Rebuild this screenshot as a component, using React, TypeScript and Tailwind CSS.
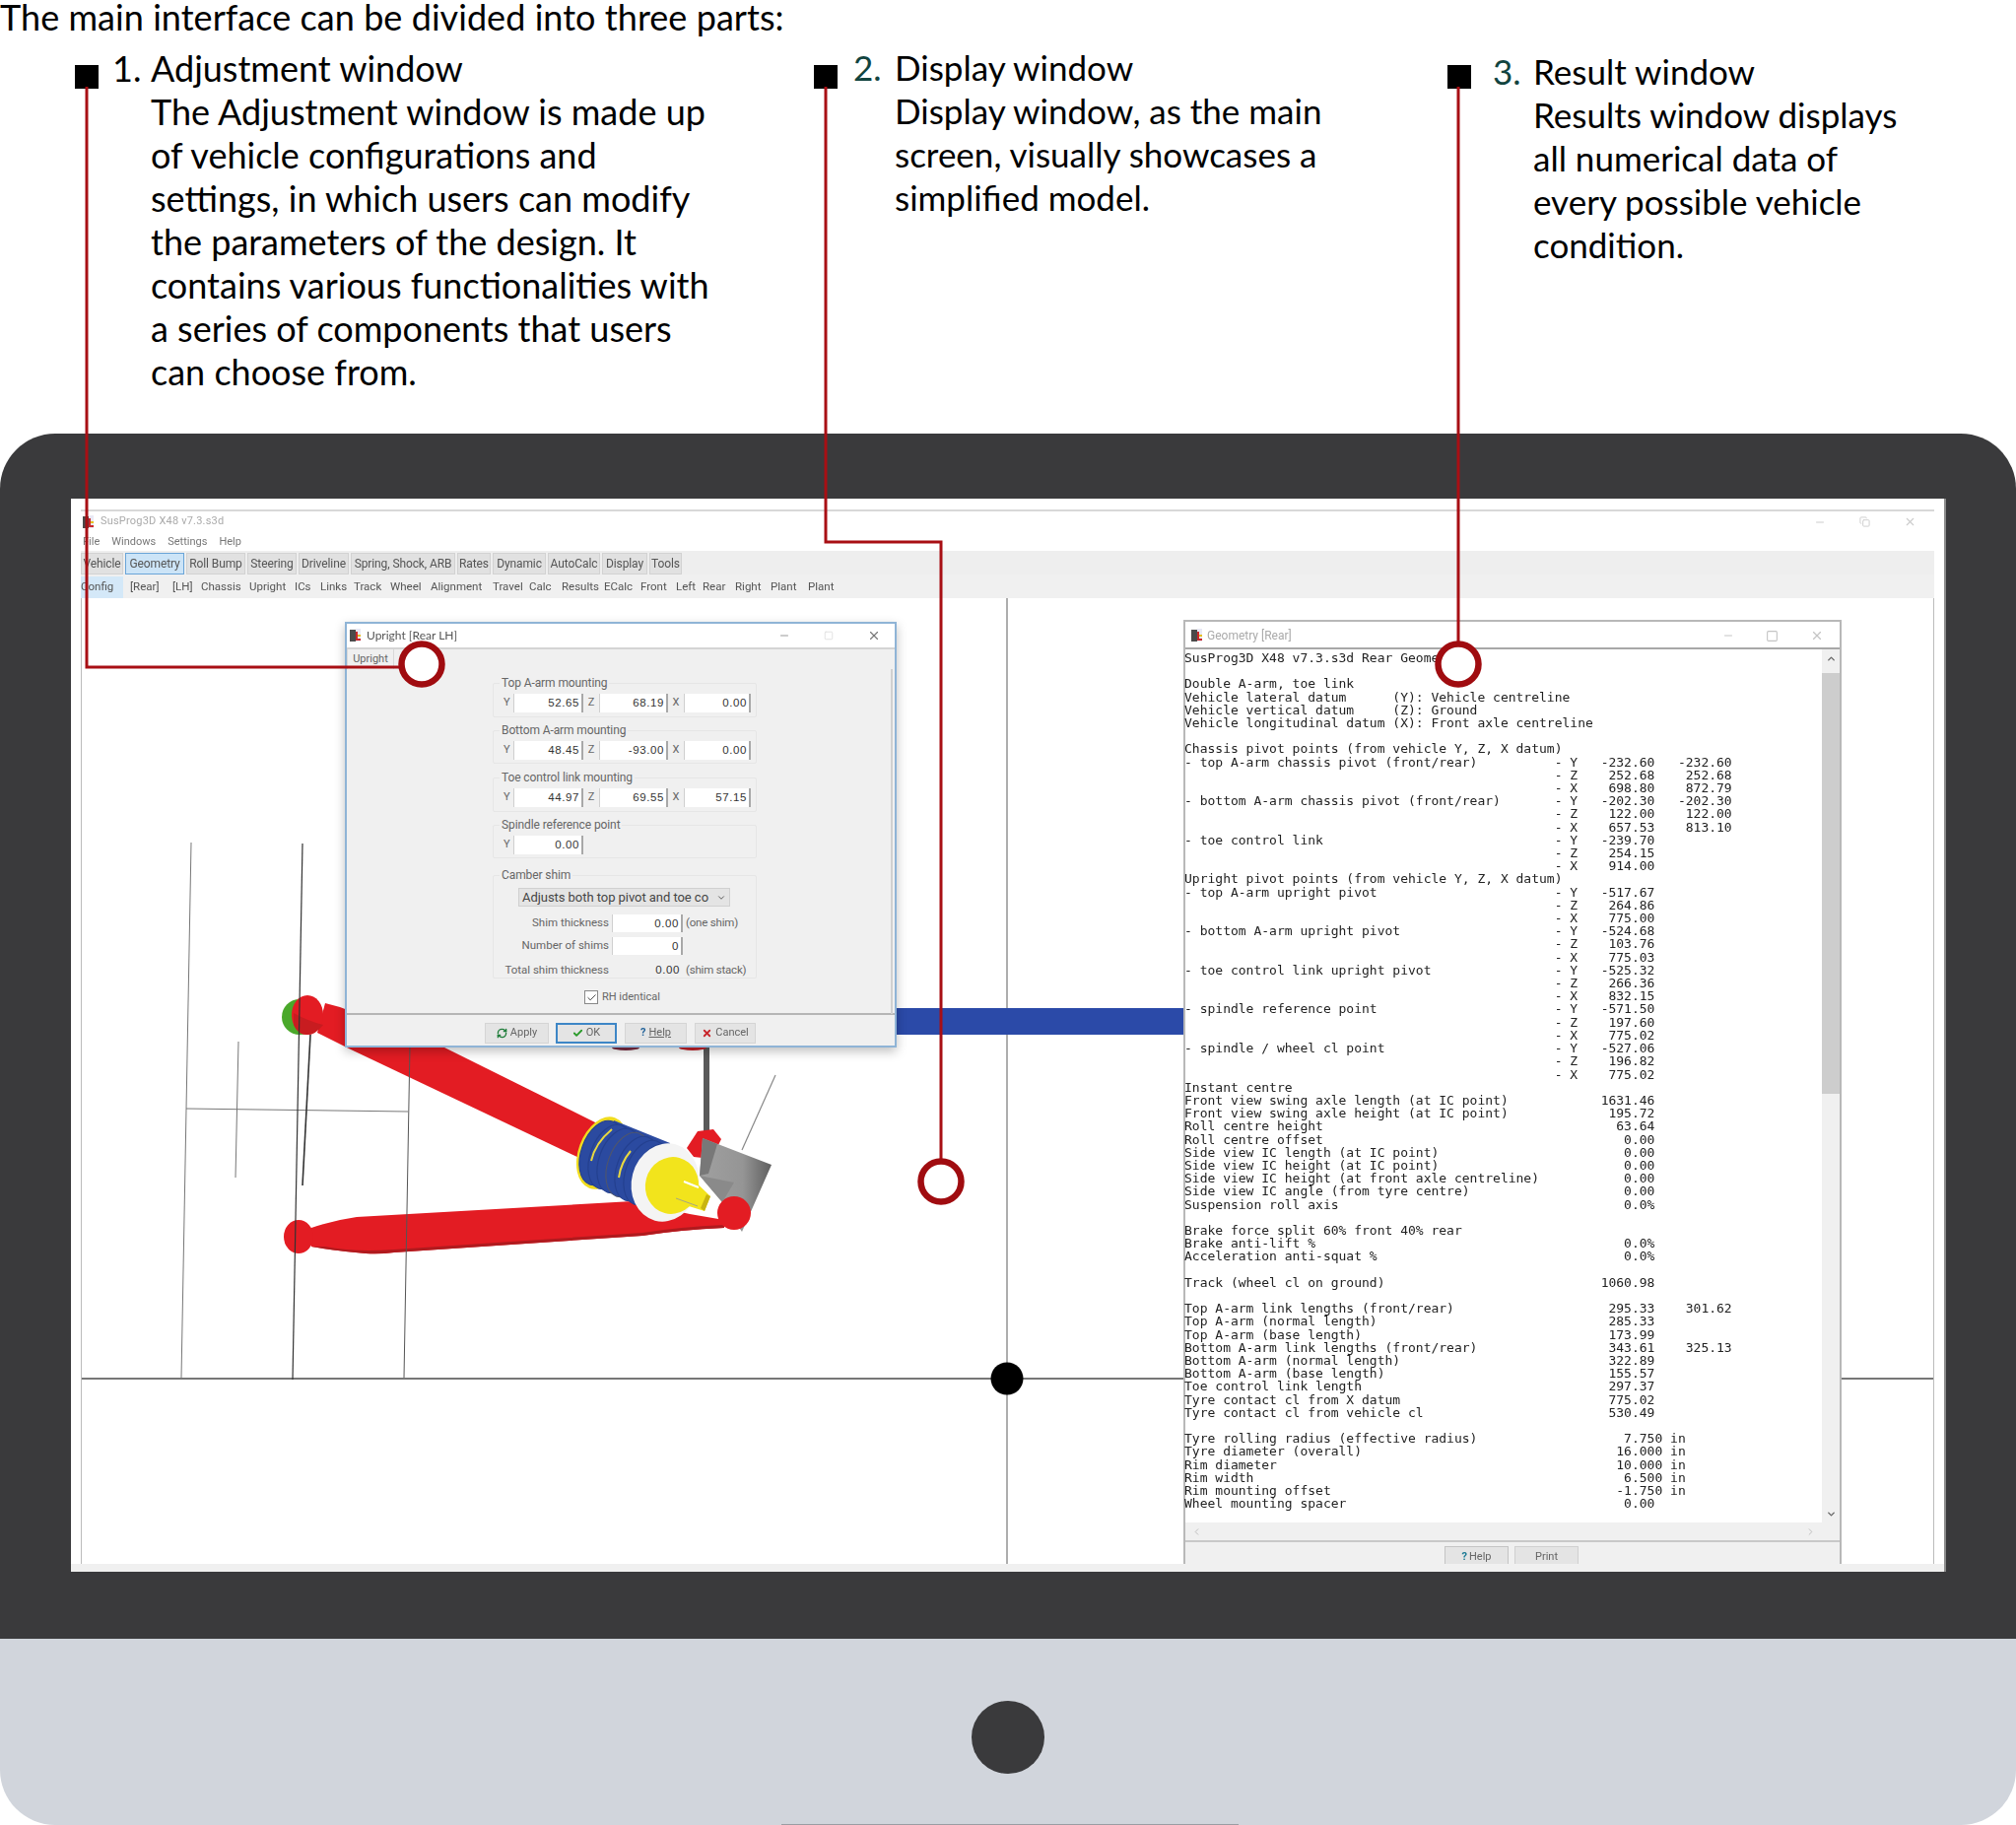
import React from "react";
import { Check, ChevronDown, ChevronLeft, ChevronRight, ChevronUp, Copy, Minus, RefreshCw, Square, X } from "lucide-react";

const tabs = [
  ["Vehicle", "w-[43px] bg-[#e1e1e1] border-[#d2d2d2]"],
  ["Geometry", "w-[60px] bg-[#cce4f7] border-[#6aa5d8]"],
  ["Roll Bump", "w-[60px] bg-[#e1e1e1] border-[#d2d2d2]"],
  ["Steering", "w-[50px] bg-[#e1e1e1] border-[#d2d2d2]"],
  ["Driveline", "w-[51px] bg-[#e1e1e1] border-[#d2d2d2]"],
  ["Spring, Shock, ARB", "w-[106px] bg-[#e1e1e1] border-[#d2d2d2]"],
  ["Rates", "w-[34px] bg-[#e1e1e1] border-[#d2d2d2]"],
  ["Dynamic", "w-[54px] bg-[#e1e1e1] border-[#d2d2d2]"],
  ["AutoCalc", "w-[53px] bg-[#e1e1e1] border-[#d2d2d2]"],
  ["Display", "w-[46px] bg-[#e1e1e1] border-[#d2d2d2]"],
  ["Tools", "w-[33px] bg-[#e1e1e1] border-[#d2d2d2]"],
];

const subTabs = [
  ["Config", "w-[50px]"],
  ["[Rear]", "w-[43px]"],
  ["[LH]", "w-[29px]"],
  ["Chassis", "w-[49px]"],
  ["Upright", "w-[46px]"],
  ["ICs", "w-[26px]"],
  ["Links", "w-[34px]"],
  ["Track", "w-[37px]"],
  ["Wheel", "w-[41px]"],
  ["Alignment", "w-[63px]"],
  ["Travel", "w-[37px]"],
  ["Calc", "w-[33px]"],
  ["Results", "w-[43px]"],
  ["ECalc", "w-[37px]"],
  ["Front", "w-[36px]"],
  ["Left", "w-[27px]"],
  ["Rear", "w-[33px]"],
  ["Right", "w-[36px]"],
  ["Plant", "w-[38px]"],
  ["Plant", "w-[38px]"],
];

function row(label: string, tag: string, v1: string, v2 = "") {
  let s = label.padEnd(48, " ");
  s += tag ? "- " + tag : "   ";
  s = s.padEnd(61 - v1.length, " ") + v1;
  if (v2) s = s.padEnd(71 - v2.length, " ") + v2;
  return s;
}

function val(label: string, v1: string) {
  return label.padEnd(61 - v1.length, " ") + v1;
}

function inch(label: string, v1: string) {
  return label.padEnd(62 - v1.length, " ") + v1 + " in";
}

const report = [
  "SusProg3D X48 v7.3.s3d Rear Geometry",
  "",
  "Double A-arm, toe link",
  "Vehicle lateral datum      (Y): Vehicle centreline",
  "Vehicle vertical datum     (Z): Ground",
  "Vehicle longitudinal datum (X): Front axle centreline",
  "",
  "Chassis pivot points (from vehicle Y, Z, X datum)",
  row("- top A-arm chassis pivot (front/rear)", "Y", "-232.60", "-232.60"),
  row("", "Z", "252.68", "252.68"),
  row("", "X", "698.80", "872.79"),
  row("- bottom A-arm chassis pivot (front/rear)", "Y", "-202.30", "-202.30"),
  row("", "Z", "122.00", "122.00"),
  row("", "X", "657.53", "813.10"),
  row("- toe control link", "Y", "-239.70"),
  row("", "Z", "254.15"),
  row("", "X", "914.00"),
  "Upright pivot points (from vehicle Y, Z, X datum)",
  row("- top A-arm upright pivot", "Y", "-517.67"),
  row("", "Z", "264.86"),
  row("", "X", "775.00"),
  row("- bottom A-arm upright pivot", "Y", "-524.68"),
  row("", "Z", "103.76"),
  row("", "X", "775.03"),
  row("- toe control link upright pivot", "Y", "-525.32"),
  row("", "Z", "266.36"),
  row("", "X", "832.15"),
  row("- spindle reference point", "Y", "-571.50"),
  row("", "Z", "197.60"),
  row("", "X", "775.02"),
  row("- spindle / wheel cl point", "Y", "-527.06"),
  row("", "Z", "196.82"),
  row("", "X", "775.02"),
  "Instant centre",
  val("Front view swing axle length (at IC point)", "1631.46"),
  val("Front view swing axle height (at IC point)", "195.72"),
  val("Roll centre height", "63.64"),
  val("Roll centre offset", "0.00"),
  val("Side view IC length (at IC point)", "0.00"),
  val("Side view IC height (at IC point)", "0.00"),
  val("Side view IC height (at front axle centreline)", "0.00"),
  val("Side view IC angle (from tyre centre)", "0.00"),
  val("Suspension roll axis", "0.0%"),
  "",
  "Brake force split 60% front 40% rear",
  val("Brake anti-lift %", "0.0%"),
  val("Acceleration anti-squat %", "0.0%"),
  "",
  val("Track (wheel cl on ground)", "1060.98"),
  "",
  row("Top A-arm link lengths (front/rear)", "", "295.33", "301.62"),
  val("Top A-arm (normal length)", "285.33"),
  val("Top A-arm (base length)", "173.99"),
  row("Bottom A-arm link lengths (front/rear)", "", "343.61", "325.13"),
  val("Bottom A-arm (normal length)", "322.89"),
  val("Bottom A-arm (base length)", "155.57"),
  val("Toe control link length", "297.37"),
  val("Tyre contact cl from X datum", "775.02"),
  val("Tyre contact cl from vehicle cl", "530.49"),
  "",
  inch("Tyre rolling radius (effective radius)", "7.750"),
  inch("Tyre diameter (overall)", "16.000"),
  inch("Rim diameter", "10.000"),
  inch("Rim width", "6.500"),
  inch("Rim mounting offset", "-1.750"),
  val("Wheel mounting spacer", "0.00"),
].join("\n");

function AppIcon() {
  return (
    <svg width="13" height="14" viewBox="0 0 13 14" className="shrink-0">
      <rect x="0" y="1" width="7" height="12" fill="#4a4a4a" />
      <rect x="6" y="0" width="5" height="13" fill="#e9e9f5" />
      <path d="M6 3h2v7h3v2H6z" fill="#c8282c" />
      <path d="M8 6h3v2H8z" fill="#e6c020" />
    </svg>
  );
}

function Field({ value, className }: { value: string; className: string }) {
  return (
    <div
      className={`bg-white border-r-2 border-[#a8a8a8] border-l border-l-[#cfcfcf] pr-[2px] text-right text-[11.5px] tracking-[0.6px] text-[#333] font-['Liberation_Sans',sans-serif] ${className}`}
    >
      {value}
    </div>
  );
}

function Group({ title, className, children }: { title: string; className: string; children: React.ReactNode }) {
  return (
    <div className={`relative ml-[148px] w-[268px] border border-[#e6e6e6] rounded-[2px] ${className}`}>
      <div className="absolute left-[6px] top-[-8px] whitespace-nowrap bg-[#f0f0f0] px-[2px] text-[12px] leading-[14px] text-[#666] tracking-[-0.1px]">
        {title}
      </div>
      {children}
    </div>
  );
}

function TripleRow({ y, z, x }: { y: string; z: string; x: string }) {
  return (
    <div className="flex items-center pl-[10px] pt-[10px] text-[11px] text-[#666]">
      <span className="w-[10px]">Y</span>
      <Field value={y} className="h-[19px] w-[71px] leading-[19px]" />
      <span className="w-[16px] text-center">Z</span>
      <Field value={z} className="h-[19px] w-[70px] leading-[19px]" />
      <span className="w-[16px] text-center">X</span>
      <Field value={x} className="h-[19px] w-[68px] leading-[19px]" />
    </div>
  );
}

function DialogButton({ className, children }: { className: string; children: React.ReactNode }) {
  return (
    <div className={`flex h-[21px] items-center justify-center gap-[3px] border text-[11px] text-[#666] ${className}`}>
      {children}
    </div>
  );
}

function UprightWindow() {
  return (
    <div className="absolute left-[267px] top-[24px] flex h-[432px] w-[560px] flex-col border-2 border-[#8fb4d6] bg-white shadow-[0_4px_10px_rgba(0,0,0,0.25)]">
      <div className="flex h-[24px] shrink-0 items-center pl-[3px] text-[12px] text-[#555]">
        <AppIcon />
        <span className="ml-[4px]">Upright [Rear LH]</span>
        <div className="ml-auto flex items-center gap-[34px] pr-[14px] text-[#999]">
          <Minus size={12} />
          <Square size={10} className="text-[#ddd]" />
          <X size={14} className="text-[#777]" />
        </div>
      </div>
      <div className="relative flex-1 border-t-2 border-[#d4d4d4] bg-[#f0f0f0] font-['Roboto',sans-serif]">
        <div className="flex h-[20px] w-[48px] items-center justify-center border-x border-[#d9d9d9] text-[11px] text-[#666]">Upright</div>
        <Group title="Top A-arm mounting" className="mt-[14px] h-[35px]">
          <TripleRow y="52.65" z="68.19" x="0.00" />
        </Group>
        <Group title="Bottom A-arm mounting" className="mt-[13px] h-[34px]">
          <TripleRow y="48.45" z="-93.00" x="0.00" />
        </Group>
        <Group title="Toe control link mounting" className="mt-[14px] h-[35px]">
          <TripleRow y="44.97" z="69.55" x="57.15" />
        </Group>
        <Group title="Spindle reference point" className="mt-[13px] h-[34px]">
          <div className="flex items-center pl-[10px] pt-[10px] text-[11px] text-[#666]">
            <span className="w-[10px]">Y</span>
            <Field value="0.00" className="h-[19px] w-[71px] leading-[19px]" />
          </div>
        </Group>
        <Group title="Camber shim" className="mt-[17px] h-[105px] text-[11.5px] text-[#666]">
          <div className="ml-[25px] mt-[12px] flex h-[19px] w-[215px] items-center justify-between border border-[#d0d0d0] bg-[#e4e4e4] px-[3px] text-[13px] tracking-[-0.05px] text-[#444]">
            <span>Adjusts both top pivot and toe co</span>
            <ChevronDown size={10} />
          </div>
          <div className="mt-[8px] flex h-[18px] items-center">
            <span className="w-[117px] text-right">Shim thickness</span>
            <Field value="0.00" className="ml-[3px] h-[18px] w-[72px] leading-[18px]" />
            <span className="ml-[3px] tracking-[-0.2px]">(one shim)</span>
          </div>
          <div className="mt-[5px] flex h-[18px] items-center">
            <span className="w-[117px] text-right">Number of shims</span>
            <Field value="0" className="ml-[3px] h-[18px] w-[72px] leading-[18px]" />
          </div>
          <div className="mt-[7px] flex h-[18px] items-center">
            <span className="w-[117px] text-right">Total shim thickness</span>
            <span className="ml-[3px] w-[69px] text-right font-['Liberation_Sans',sans-serif] tracking-[0.6px] text-[#333]">0.00</span>
            <span className="ml-[6px] tracking-[-0.2px]">(shim stack)</span>
          </div>
        </Group>
        <div className="ml-[241px] mt-[11px] flex items-center gap-[4px] text-[11px] text-[#666]">
          <div className="flex h-[14px] w-[14px] items-center justify-center border border-[#888] bg-white">
            <Check size={11} className="text-[#333]" />
          </div>
          <span>RH identical</span>
        </div>
        <div className="absolute right-[2px] top-[20px] h-[350px] w-[2px] bg-[#d0d0d0]" />
      </div>
      <div className="flex h-[33px] shrink-0 gap-[7px] border-t-2 border-[#b5b5b5] bg-[#f0f0f0] pl-[140px] pt-[8px] font-['Roboto',sans-serif]">
        <DialogButton className="w-[65px] border-[#d5d5d5] bg-[#e4e4e4]">
          <RefreshCw size={11} className="text-[#1f7d3a]" strokeWidth={3} />
          <span>Apply</span>
        </DialogButton>
        <DialogButton className="w-[62px] border-[#3d86c6] border-2 bg-[#e4e4e4]">
          <Check size={11} className="text-[#2a9a2a]" strokeWidth={4} />
          <span>OK</span>
        </DialogButton>
        <DialogButton className="ml-[1px] w-[63px] border-[#d5d5d5] bg-[#e4e4e4]">
          <span className="font-bold text-[#23639a]">?</span>
          <span className="underline">Help</span>
        </DialogButton>
        <DialogButton className="ml-[1px] w-[62px] border-[#d5d5d5] bg-[#e4e4e4]">
          <X size={11} className="text-[#c8262c]" strokeWidth={4} />
          <span>Cancel</span>
        </DialogButton>
      </div>
    </div>
  );
}

function GeometryWindow() {
  return (
    <div className="absolute left-[1118px] top-[22px] flex h-[958px] w-[668px] flex-col border-x-2 border-t-2 border-[#b8b8b8] bg-white">
      <div className="flex h-[28px] shrink-0 items-center border-b-2 border-[#a8a8a8] pl-[6px] pt-[2px] font-['Roboto',sans-serif] text-[12px] text-[#aaa]">
        <AppIcon />
        <span className="ml-[3px]">Geometry [Rear]</span>
        <div className="ml-auto flex items-center gap-[32px] pr-[16px] text-[#c4c4c4]">
          <Minus size={12} />
          <Square size={13} />
          <X size={14} />
        </div>
      </div>
      <div className="flex min-h-0 flex-1">
        <pre className="-ml-[1px] min-w-0 flex-1 overflow-hidden pt-[2px] font-['DejaVu_Sans_Mono',monospace] text-[13px] leading-[13.2px] text-[#222]">
          {report}
        </pre>
        <div className="flex w-[18px] shrink-0 flex-col items-center bg-[#f0f0f0] text-[#666]">
          <ChevronUp size={11} className="mt-[4px] shrink-0" strokeWidth={3} />
          <div className="mt-[9px] h-[427px] w-full bg-[#cdcdcd]" />
          <ChevronDown size={11} className="mt-auto mb-[3px] shrink-0" strokeWidth={3} />
        </div>
      </div>
      <div className="flex h-[18px] shrink-0 items-center justify-between bg-[#f0f0f0] px-[6px] pr-[24px] text-[#bbb]">
        <ChevronLeft size={11} />
        <ChevronRight size={11} />
      </div>
      <div className="flex h-[24px] shrink-0 gap-[6px] overflow-hidden border-t-2 border-[#c8c8c8] bg-[#f0f0f0] pl-[263px] pt-[4px] font-['Roboto',sans-serif] text-[11px] text-[#666]">
        <div className="flex h-[28px] w-[65px] items-start justify-center gap-[2px] border border-[#c4c4c4] bg-[#e4e4e4] pt-[2px]">
          <span className="font-bold text-[#1b7a94]">?</span>
          <span>Help</span>
        </div>
        <div className="flex h-[28px] w-[65px] items-start justify-center border border-[#d0d0d0] bg-[#e4e4e4] pt-[2px]">Print</div>
      </div>
    </div>
  );
}

const coils = [0, 1, 2, 3, 4, 5, 6];

function Scene() {
  return (
    <svg
      className="absolute left-0 top-0"
      width="1881"
      height="980"
      viewBox="83 607 1881 980"
      fill="none"
    >
      <defs>
        <linearGradient id="blockShade" x1="0" y1="0" x2="1" y2="0">
          <stop offset="0" stopColor="#a0a0a0" />
          <stop offset="0.6" stopColor="#959595" />
          <stop offset="1" stopColor="#5f5f5f" />
        </linearGradient>
      </defs>
      <line x1="1022" y1="607" x2="1022" y2="1587" stroke="#777" strokeWidth="1.2" />
      <line x1="82" y1="1399" x2="1963" y2="1399" stroke="#777" strokeWidth="2" />
      <circle cx="1022" cy="1399" r="16.5" fill="#000" />
      <rect x="900" y="1023" width="310" height="27" fill="#2b4aa8" />

      <g stroke="#777" strokeWidth="1">
        <line x1="194" y1="855" x2="184" y2="1398" />
        <line x1="242" y1="1057" x2="239" y2="1195" />
        <line x1="189" y1="1125" x2="414" y2="1128" />
      </g>
      <line x1="787" y1="1091" x2="753" y2="1167" stroke="#888" strokeWidth="1.2" />
      <rect x="714" y="1060" width="6" height="90" fill="#5a5a5a" />

      <circle cx="304" cy="1032" r="18" fill="#4aa82a" />
      <path d="M330 1018 L345 1022 L445 1060 L612 1143 L590 1176 L356 1065 L322 1048 Z" fill="#e31c23" />
      <ellipse cx="312" cy="1030" rx="16" ry="20" fill="#e31c23" />
      <path d="M298 1028 Q312 1036 328 1040 Q320 1050 312 1050 Q302 1050 298 1040 Z" fill="#c81c20" />

      <path d="M697 1165 L708 1148 L724 1146 L732 1156 L722 1176 L704 1174 Z" fill="#e31c23" />
      <path d="M713 1155 L783 1182 L753 1250 L733 1220 L710 1193 Z" fill="url(#blockShade)" />
      <path d="M713 1155 L728 1161 L719 1191 L710 1193 Z" fill="#787878" />
      <path d="M710 1193 L745 1200 L733 1220 Z" fill="#8a8a8a" />

      <path
        d="M316 1246 Q340 1238 362 1235 L642 1219 L700 1232 L735 1238 L735 1246 Q690 1248 652 1254 L400 1271 Q385 1273 371 1272 Q345 1270 316 1265 Z"
        fill="#e31c23"
      />
      <path d="M400 1271 L652 1254 Q690 1248 735 1246 L735 1243 Q690 1245 652 1251 L400 1268 Q360 1271 330 1265 L316 1265 Q345 1270 371 1272 Q385 1273 400 1271 Z" fill="#b01a1e" />
      <ellipse cx="303" cy="1255" rx="15" ry="17" fill="#e31c23" />
      <circle cx="745" cy="1231" r="17" fill="#e31c23" />

      <ellipse cx="611" cy="1170" rx="24" ry="38" transform="rotate(20 611 1170)" fill="#f0dc1e" />
      <path d="M623 1137 L680 1160 L650 1224 L597 1201 Z" fill="#2b4aa0" />
      {coils.map((i) => (
        <ellipse
          key={i}
          cx={610 + i * 9}
          cy={1170 + i * 4}
          rx="20"
          ry="34"
          transform={`rotate(20 ${610 + i * 9} ${1170 + i * 4})`}
          fill="#2b4aa0"
          stroke={i === 3 ? "#4d5570" : "#24408f"}
          strokeWidth="1.2"
        />
      ))}
      <path d="M621 1146 Q604 1160 600 1178" stroke="#e8d840" strokeWidth="2" />
      <path d="M640 1168 Q630 1180 628 1195" stroke="#e8d840" strokeWidth="2" />
      <ellipse cx="675" cy="1200" rx="34" ry="40" transform="rotate(15 675 1200)" fill="#f4f4f4" />
      <ellipse cx="682" cy="1203" rx="27" ry="29" transform="rotate(15 682 1203)" fill="#f2e41c" />
      <path d="M698 1192 L721 1214 L715 1229 L680 1218 Z" fill="#f2e41c" />
      <path d="M694 1199 L709 1205" stroke="#fff" strokeWidth="2" />
      <path d="M686 1216 L708 1224" stroke="#a8a880" strokeWidth="1" />
      <path d="M721 1214 L715 1229 L711 1226 L717 1212 Z" fill="#c8b410" />

      <ellipse cx="635" cy="1063" rx="14" ry="3" fill="#7a2a40" />
      <ellipse cx="703" cy="1063" rx="14" ry="3" fill="#c42028" />

      <line x1="307" y1="856" x2="297" y2="1400" stroke="#333" strokeWidth="1.2" />
      <line x1="315" y1="1050" x2="307" y2="1203" stroke="#333" strokeWidth="1.6" />
      <line x1="416" y1="1060" x2="410" y2="1398" stroke="#555" strokeWidth="1" />
    </svg>
  );
}

function Leaders() {
  return (
    <svg className="pointer-events-none absolute left-0 top-0" width="2046" height="1852" fill="none">
      <g stroke="#a80f14" strokeWidth="3">
        <path d="M88 88 V677 H410" />
        <path d="M838 88 V550 H955 V1180" />
        <path d="M1480 88 V655" />
      </g>
      <g stroke="#a00c10" strokeWidth="6.5" fill="#fff">
        <circle cx="428" cy="674" r="20.5" />
        <circle cx="955" cy="1199" r="20.5" />
        <circle cx="1480" cy="674" r="20.5" />
      </g>
    </svg>
  );
}

function ListItem({
  number,
  numberClass,
  rootClass,
  textClass,
  numWidth,
  lines,
}: {
  number: string;
  numberClass: string;
  rootClass: string;
  textClass: string;
  numWidth: string;
  lines: string[];
}) {
  return (
    <div className={`flex shrink-0 ${rootClass}`}>
      <div className="mt-[19px] h-[24px] w-[24px] shrink-0 bg-black" />
      <div className={`flex leading-[44px] ${textClass}`}>
        <div className={`shrink-0 ${numWidth} ${numberClass}`}>{number}</div>
        <div>
          {lines.map((l) => (
            <div key={l} className="whitespace-nowrap">
              {l}
            </div>
          ))}
        </div>
      </div>
    </div>
  );
}

export default function App() {
  return (
    <div className="relative flex h-[1852px] w-[2046px] flex-col overflow-hidden bg-white font-['Lato',sans-serif] text-black">
      <div className="h-[32px] whitespace-nowrap pt-[2px] text-[36px] leading-[30px] tracking-[0.05px]">
        The main interface can be divided into three parts:
      </div>

      <div className="flex h-[408px] pl-[76px] pt-[15px]">
        <ListItem
          number="1."
          numberClass=""
          rootClass="w-[750px]"
          textClass="ml-[14px] text-[36px]"
          numWidth="w-[39px]"
          lines={[
            "Adjustment window",
            "The Adjustment window is made up",
            "of vehicle configurations and",
            "settings, in which users can modify",
            "the parameters of the design. It",
            "contains various functionalities with",
            "a series of components that users",
            "can choose from.",
          ]}
        />
        <ListItem
          number="2."
          numberClass="text-[#12443f]"
          rootClass="w-[643px]"
          textClass="ml-[16px] -mt-[1px] text-[35px]"
          numWidth="w-[42px]"
          lines={[
            "Display window",
            "Display window, as the main",
            "screen, visually showcases a",
            "simplified model.",
          ]}
        />
        <ListItem
          number="3."
          numberClass="text-[#12443f]"
          rootClass="flex-1"
          textClass="ml-[22px] mt-[3px] text-[35px]"
          numWidth="w-[41px]"
          lines={[
            "Result window",
            "Results window displays",
            "all numerical data of",
            "every possible vehicle",
            "condition.",
          ]}
        />
      </div>

      <div className="h-[1223px] rounded-t-[56px] bg-[#3a3a3c] pl-[72px] pr-[71px] pt-[66px]">
        <div className="flex h-[1089px] flex-col border-r-2 border-[#8c8c8c] bg-white">
          <div className="flex min-h-0 flex-1 flex-col px-[10px] pt-[11px] blur-[0.6px]">
            <div className="flex h-[42px] shrink-0 flex-col border-t-2 border-[#d8d8d8] font-['Roboto',sans-serif] text-[11px]">
              <div className="flex h-[21px] items-center pl-[2px] text-[#aaa]">
                <AppIcon />
                <span className="ml-[5px] tracking-[0.2px]">SusProg3D X48 v7.3.s3d</span>
                <div className="ml-auto flex items-center gap-[34px] pr-[18px] text-[#ccc]">
                  <Minus size={12} />
                  <Copy size={11} />
                  <X size={13} />
                </div>
              </div>
              <div className="flex gap-[12px] pl-[2px] pt-[2px] text-[#777]">
                <span>File</span>
                <span>Windows</span>
                <span>Settings</span>
                <span>Help</span>
              </div>
            </div>

            <div className="flex h-[24px] shrink-0 items-stretch gap-[2px] bg-[#eeeeee] pt-[2px] font-['Roboto',sans-serif] text-[12px] text-[#555]">
              {tabs.map(([name, cls]) => (
                <div
                  key={name}
                  className={`flex items-center justify-center whitespace-nowrap border tracking-[-0.1px] ${cls}`}
                >
                  {name}
                </div>
              ))}
            </div>
            <div className="flex h-[24px] shrink-0 items-stretch bg-[#f0f0f0] font-['Roboto',sans-serif] text-[11.5px] text-[#555]">
              {subTabs.map(([name, width], i) => (
                <div key={name + i} className={`flex items-center pt-[2px] ${width}`}>
                  <span className={i === 0 ? "flex h-full w-[43px] items-center bg-[#d4e8f8]" : ""}>{name}</span>
                </div>
              ))}
            </div>

            <div className="relative min-h-0 flex-1 overflow-hidden border-x border-[#bcbcbc] bg-white">
              <Scene />
              <UprightWindow />
              <GeometryWindow />
            </div>
          </div>
          <div className="h-[8px] shrink-0 bg-[#f0f0f0]" />
        </div>
      </div>

      <div className="relative flex h-[189px] items-center justify-center rounded-b-[56px] bg-[#d1d5dc] pt-[10px]">
        <div className="h-[74px] w-[74px] rounded-full bg-[#3a3a3c]" />
        <div className="absolute bottom-0 left-[793px] h-[1px] w-[464px] bg-[#9a9da3]" />
      </div>

      <Leaders />
    </div>
  );
}
